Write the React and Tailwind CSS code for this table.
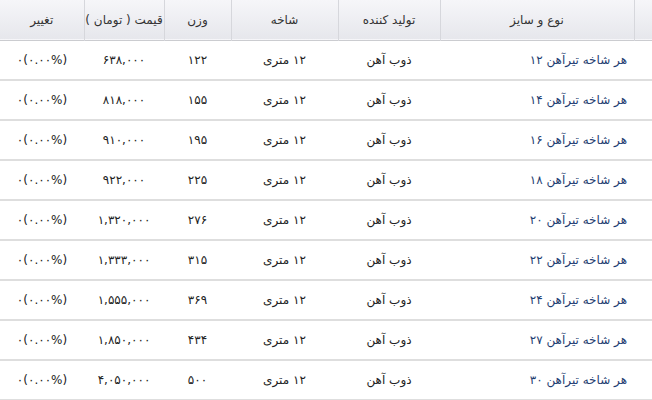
import React from 'react';

const rows = [
	{ size: '۱۲', weight: '۱۲۲', price: '۶۳۸,۰۰۰' },
	{ size: '۱۴', weight: '۱۵۵', price: '۸۱۸,۰۰۰' },
	{ size: '۱۶', weight: '۱۹۵', price: '۹۱۰,۰۰۰' },
	{ size: '۱۸', weight: '۲۲۵', price: '۹۲۲,۰۰۰' },
	{ size: '۲۰', weight: '۲۷۶', price: '۱,۳۲۰,۰۰۰' },
	{ size: '۲۲', weight: '۳۱۵', price: '۱,۳۳۳,۰۰۰' },
	{ size: '۲۴', weight: '۳۶۹', price: '۱,۵۵۵,۰۰۰' },
	{ size: '۲۷', weight: '۴۳۴', price: '۱,۸۵۰,۰۰۰' },
	{ size: '۳۰', weight: '۵۰۰', price: '۴,۰۵۰,۰۰۰' },
];

const headers = ['', 'نوع و سایز', 'تولید کننده', 'شاخه', 'وزن', 'قیمت ( تومان )', 'تغییر'];

const App = () => {
	return (
		<div
			dir="rtl"
			className="w-[652px] h-[400px] overflow-hidden bg-white text-[12px] text-[#222]"
			style={{ fontFamily: '"DejaVu Sans", Tahoma, sans-serif' }}
		>
			<table className="w-[652px] table-fixed border-collapse">
				<colgroup>
					<col className="w-[18px]" />
					<col className="w-[194px]" />
					<col className="w-[102px]" />
					<col className="w-[107px]" />
					<col className="w-[67px]" />
					<col className="w-[80px]" />
					<col className="w-[84px]" />
				</colgroup>

				{/* Header */}
				<thead>
					<tr className="h-[40px] bg-gradient-to-b from-[#f6f6f9] to-[#e6e7ec] border-b border-[#cbccd0]">
						{headers.map((h, i) => (
							<th
								key={i}
								className={`font-normal text-[#333] text-center border-l border-[#d6d7dc] ${
									i === headers.length - 1 ? 'border-l-0' : ''
								}`}
							>
								{h}
							</th>
						))}
					</tr>
				</thead>

				{/* Rows */}
				<tbody>
					{rows.map((r) => (
						<tr key={r.size} className="h-[40px] border-b-2 border-[#dedede]">
							<td></td>
							<td className="text-right pr-[7px] text-[#1f3e72]">
								هر شاخه تیرآهن {r.size}
							</td>
							<td className="text-center">ذوب آهن</td>
							<td className="text-center">۱۲ متری</td>
							<td className="text-center">{r.weight}</td>
							<td className="text-center">{r.price}</td>
							<td className="text-center">
								<span dir="ltr">۰(۰.۰۰%)</span>
							</td>
						</tr>
					))}
				</tbody>
			</table>
		</div>
	);
};

export default App;
